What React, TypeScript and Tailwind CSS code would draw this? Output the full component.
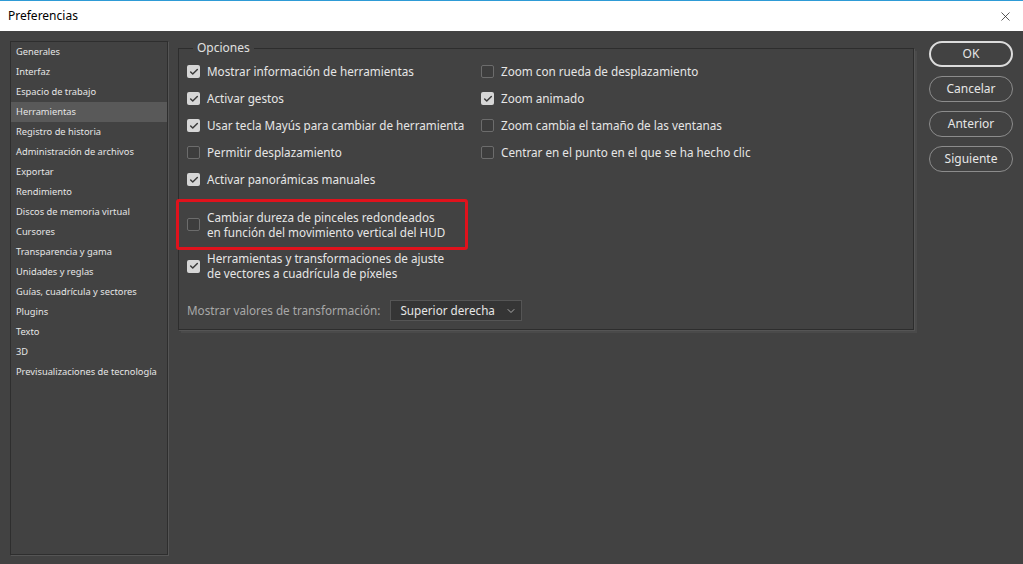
import { Check, ChevronDown, X } from 'lucide-react'

const CATEGORIES = [
  'Generales',
  'Interfaz',
  'Espacio de trabajo',
  'Herramientas',
  'Registro de historia',
  'Administración de archivos',
  'Exportar',
  'Rendimiento',
  'Discos de memoria virtual',
  'Cursores',
  'Transparencia y gama',
  'Unidades y reglas',
  'Guías, cuadrícula y sectores',
  'Plugins',
  'Texto',
  '3D',
  'Previsualizaciones de tecnología',
]

const LEFT_OPTS = [
  { label: 'Mostrar información de herramientas', on: true },
  { label: 'Activar gestos', on: true },
  { label: 'Usar tecla Mayús para cambiar de herramienta', on: true },
  { label: 'Permitir desplazamiento', on: false },
  { label: 'Activar panorámicas manuales', on: true },
]

const RIGHT_OPTS = [
  { label: 'Zoom con rueda de desplazamiento', on: false },
  { label: 'Zoom animado', on: true },
  { label: 'Zoom cambia el tamaño de las ventanas', on: false },
  { label: 'Centrar en el punto en el que se ha hecho clic', on: false },
]

function Box({ on }: { on: boolean }) {
  if (on) {
    return (
      <span className="flex h-[13px] w-[13px] shrink-0 items-center justify-center rounded-[2px] bg-[#d6d6d6]">
        <Check size={10} strokeWidth={3.5} className="text-[#3a3a3a]" />
      </span>
    )
  }
  return <span className="h-[13px] w-[13px] shrink-0 rounded-[2px] border border-[#6c6c6c] bg-[#3d3d3d]" />
}

function Option({ label, on }: { label: string; on: boolean }) {
  return (
    <div className="flex h-[27px] items-center gap-[7px]">
      <Box on={on} />
      <span className="whitespace-nowrap">{label}</span>
    </div>
  )
}

const BUTTONS = ['OK', 'Cancelar', 'Anterior', 'Siguiente']

export default function App() {
  return (
    <div className="flex h-[564px] w-[1023px] flex-col overflow-hidden bg-[#424242] font-['Noto_Sans','Open_Sans',sans-serif] text-[#e6e6e6]">
      {/* Title bar */}
      <div className="flex h-[31px] shrink-0 items-center justify-between border-t border-[#2e9bd6] bg-white pl-[8px] pr-[10px] text-[12px] text-black">
        <span>Preferencias</span>
        <X size={15} strokeWidth={1.2} className="text-[#222]" />
      </div>

      <div className="flex flex-1 gap-[10px] pl-[10px] pr-[10px] pt-[10px] pb-[9px]">
        {/* Category list */}
        <div className="flex w-[158px] flex-col border border-[#2e2e2e] text-[9.3px] shadow-[1px_1px_0_#555]">
          {CATEGORIES.map((c) => (
            <div
              key={c}
              className={`flex h-[20px] items-center px-[5px] whitespace-nowrap ${c === 'Herramientas' ? 'bg-[#595959]' : ''}`}
            >
              {c}
            </div>
          ))}
        </div>

        {/* Options group */}
        <div className="flex-1 pt-[7px]">
          <fieldset className="-mt-[7px] h-[289px] w-[736px] border border-[#2d2d2d] pl-[8px] text-[11.7px] shadow-[1px_1px_0_#555,3px_3px_0_#4a4a4a]">
            <legend className="ml-[6px] px-[4px] text-[12px] leading-[14px] text-[#e0e0e0]">Opciones</legend>
            <div className="flex gap-[20px] pt-[3px]">
              <div className="flex w-[274px] flex-col">
                {LEFT_OPTS.map((o) => (
                  <Option key={o.label} {...o} />
                ))}
              </div>
              <div className="flex flex-col">
                {RIGHT_OPTS.map((o) => (
                  <Option key={o.label} {...o} />
                ))}
              </div>
            </div>

            <div className="-ml-[11px] mt-[6px] flex h-[51px] w-[292px] items-center gap-[7px] rounded-[3px] border-[3px] border-[#e0121c] pl-[8px]">
              <Box on={false} />
              <span className="leading-[15px]">
                Cambiar dureza de pinceles redondeados
                <br />
                en función del movimiento vertical del HUD
              </span>
            </div>

            <div className="mt-[1px] flex items-center gap-[7px]">
              <Box on={true} />
              <span className="leading-[15px]">
                Herramientas y transformaciones de ajuste
                <br />
                de vectores a cuadrícula de píxeles
              </span>
            </div>

            <div className="mt-[19px] flex items-center gap-[10px]">
              <span className="text-[#a8a8a8]">Mostrar valores de transformación:</span>
              <div className="flex h-[21px] w-[132px] items-center justify-between border border-[#555] bg-[#353535] pl-[9px] pr-[4px]">
                <span>Superior derecha</span>
                <ChevronDown size={12} className="text-[#aaa]" />
              </div>
            </div>
          </fieldset>
        </div>

        {/* Buttons */}
        <div className="flex w-[84px] flex-col gap-[9px] text-[12px]">
          {BUTTONS.map((b) => (
            <div
              key={b}
              className={`flex h-[26px] items-center justify-center rounded-full ${b === 'OK' ? 'border-2 border-[#dcdcdc]' : 'border border-[#8c8c8c]'}`}
            >
              {b}
            </div>
          ))}
        </div>
      </div>
    </div>
  )
}
